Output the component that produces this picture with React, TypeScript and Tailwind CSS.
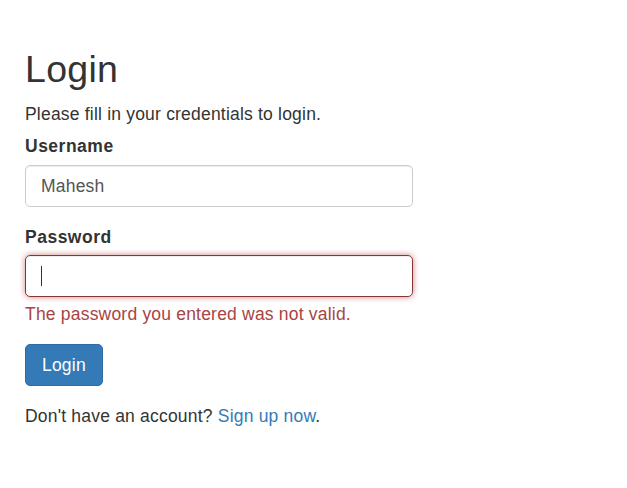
import React from 'react'

const App: React.FC = () => {
  return (
    <div className="min-h-screen bg-white text-[#333] font-['Liberation_Sans',Arial,sans-serif] text-[17.5px] leading-[25px] tracking-[0.2px]">
      <div className="w-[438px] px-[25px] pt-[49px]">
        <h2 className="text-[37.5px] leading-[41px] font-normal tracking-[0.3px] mb-[12px]">
          Login
        </h2>
        <p className="mb-[7px]">Please fill in your credentials to login.</p>
        <form onSubmit={(e) => e.preventDefault()}>
          <div className="mb-[18px]">
            <label className="block font-bold tracking-[0.5px] mb-[6px]">
              Username
            </label>
            <input
              type="text"
              value="Mahesh"
              readOnly
              className="block w-full h-[42px] px-[15px] border border-[#ccc] rounded-[5px] text-[#555] shadow-[inset_0_1px_1px_rgba(0,0,0,0.075)] outline-none"
            />
          </div>
          <div className="mb-[17px]">
            <label className="block font-bold tracking-[0.5px] mb-[5px]">
              Password
            </label>
            <div className="relative">
              <input
                type="password"
                readOnly
                className="block w-full h-[42px] px-[15px] border border-[#843534] rounded-[5px] text-[#555] shadow-[inset_0_1px_1px_rgba(0,0,0,0.075),0_0_6px_#ce8483] outline-none"
              />
              <span className="absolute left-[16px] top-[11px] w-px h-[20px] bg-[#333]" />
            </div>
            <span className="block mt-[5px] text-[#a94442]">
              The password you entered was not valid.
            </span>
          </div>
          <button
            type="submit"
            className="h-[42px] px-[16px] bg-[#337ab7] border border-[#2e6da4] rounded-[5px] text-white"
          >
            Login
          </button>
          <p className="mt-[18px]">
            Don't have an account?{' '}
            <a href="#" className="text-[#337ab7]">
              Sign up now
            </a>
            .
          </p>
        </form>
      </div>
    </div>
  )
}

export default App
